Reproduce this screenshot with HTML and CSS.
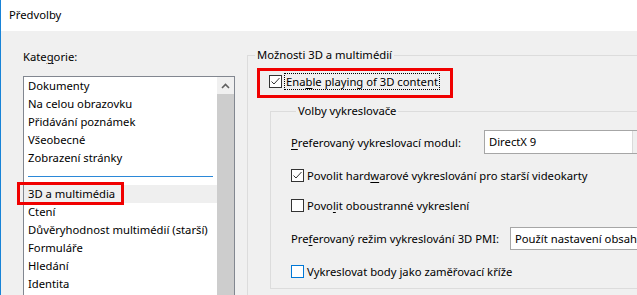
FILE: index.html
```html
<!DOCTYPE html>
<html lang="cs">
<head>
  <meta charset="UTF-8" />
  <title>Předvolby</title>
  <link rel="stylesheet" href="styles.css">
</head>
<body>

  <div class="window">
    <div class="titlebar">Předvolby</div>

    <div class="content">
      <!-- left: category list -->
      <div class="categories">
        <div class="cat-label">Kate<u>g</u>orie:</div>
        <div class="listbox">
          <ul class="cat-list">
            <li>Dokumenty</li>
            <li>Na celou obrazovku</li>
            <li>Přidávání poznámek</li>
            <li>Všeobecné</li>
            <li>Zobrazení stránky</li>
            <li class="sep"><span></span></li>
            <li class="selected">3D a multimédia<span class="callout"></span></li>
            <li>Ctení</li>
            <li>Důvěryhodnost multimédií (starší)</li>
            <li>Formuláře</li>
            <li>Hledání</li>
            <li>Identita</li>
          </ul>
          <div class="scrollbar">
            <div class="scroll-btn">
              <svg width="9" height="6" viewBox="0 0 9 6"><polyline points="1,5 4.5,1.5 8,5" fill="none" stroke="#606060" stroke-width="1.6"/></svg>
            </div>
            <div class="scroll-thumb"></div>
          </div>
        </div>
      </div>

      <!-- right: settings -->
      <div class="settings">
        <fieldset class="group outer">
          <legend>Možnosti 3D a multimédií</legend>

          <div class="enable-row">
            <span class="checkbox checked">
              <svg width="11" height="11" viewBox="0 0 11 11"><polyline points="1.5,5.5 4,8 9.5,2" fill="none" stroke="#333" stroke-width="1"/></svg>
            </span>
            <span class="focus-text">Ena<u>b</u>le playing of 3D content</span>
            <span class="callout"></span>
          </div>

          <fieldset class="group inner">
            <legend>Volby vykreslovače</legend>

            <div class="row">
              <span class="label module-label"><u>P</u>referovaný vykreslovací modul:</span>
              <div class="combo module-combo"><span class="combo-text">DirectX 9</span><span class="combo-btn"></span></div>
            </div>

            <div class="row">
              <span class="checkbox checked">
                <svg width="11" height="11" viewBox="0 0 11 11"><polyline points="1.5,5.5 4,8 9.5,2" fill="none" stroke="#333" stroke-width="1"/></svg>
              </span>
              <span class="check-text">Povolit hard<u>w</u>arové vykreslování pro starší videokarty</span>
            </div>

            <div class="row">
              <span class="checkbox"></span>
              <span class="check-text">Povo<u>l</u>it oboustranné vykreslení</span>
            </div>

            <div class="row">
              <span class="label pmi-label">Pre<u>f</u>erovaný režim vykreslování 3D PMI:</span>
              <div class="combo pmi-combo"><span class="combo-text">Použít nastavení obsahu</span></div>
            </div>

            <div class="row">
              <span class="checkbox hover"></span>
              <span class="check-text">Vykreslovat body jako zaměřovací kříže</span>
            </div>
          </fieldset>
        </fieldset>
      </div>
    </div>
  </div>

</body>
</html>
```

FILE: styles.css
```css
html, body {
  margin: 0;
  padding: 0;
  overflow: hidden;
  background: #f0f0f0;
}
body {
  font-family: "Noto Sans", "Open Sans", sans-serif;
  font-size: 11.25px;
  color: #000;
}
u {
  text-decoration-thickness: 1px;
  text-underline-offset: 2px;
}
.window {
  width: 760px;
  height: 295px;
  border-left: 1px solid #1883d7;
  box-sizing: border-box;
}
.titlebar {
  height: 31px;
  line-height: 30px;
  padding-left: 8px;
  background: #fff;
}
.content {
  display: flex;
  align-items: flex-start;
}

/* Category list */
.categories {
  padding: 18px 0 0 22px;
}
.cat-label {
  line-height: 16px;
  height: 16px;
  margin-bottom: 11px;
}
.listbox {
  display: flex;
  width: 212px;
  height: 240px;
  border: 1px solid #828790;
  background: #fff;
  box-sizing: border-box;
}
.cat-list {
  flex: 1;
  margin: 0;
  padding: 0;
  list-style: none;
}
.cat-list li {
  position: relative;
  height: 18px;
  line-height: 18px;
  padding-left: 4px;
  white-space: nowrap;
}
.cat-list li.sep {
  display: flex;
  align-items: center;
  padding-right: 4px;
}
.cat-list li.sep span {
  flex: 1;
  height: 1px;
  background: #2b88d8;
}
.cat-list li.selected {
  background: #efefef;
}
.callout {
  position: absolute;
  border: 3px solid #f00000;
  box-sizing: border-box;
  pointer-events: none;
}
.cat-list li.selected .callout {
  left: -7px;
  top: -3px;
  width: 107px;
  height: 23px;
}
.scrollbar {
  width: 17px;
  display: flex;
  flex-direction: column;
  background: #f0f0f0;
}
.scroll-btn {
  height: 17px;
  display: flex;
  align-items: center;
  justify-content: center;
}
.scroll-thumb {
  flex: 1;
  background: #cdcdcd;
}

/* Settings */
.settings {
  padding-top: 16px;
  margin-left: 12px;
}
.group {
  margin: 0;
  padding: 0;
  border: 1px solid #dcdcdc;
  min-width: 0;
}
.group legend {
  padding: 0 2px;
  line-height: 16px;
}
.outer {
  width: 420px;
  height: 300px;
}
.outer > legend {
  margin-left: 7px;
}
.enable-row {
  position: relative;
  display: inline-flex;
  align-items: center;
  margin: 10px 0 0 21px;
}
.enable-row .callout {
  left: -12px;
  right: -13px;
  top: -5px;
  bottom: -8px;
}
.focus-text {
  margin-left: 2px;
  padding: 0 1px;
  line-height: 15px;
  border: 1px dotted #000;
}
.inner {
  margin: 13px 0 0 22px;
  padding: 0 0 8px 20px;
  display: flex;
  flex-direction: column;
  gap: 13px;
}
.inner > legend {
  margin-left: 5px;
}
.inner > legend + .row {
  margin-top: 11px;
}
.row {
  display: flex;
  align-items: center;
  line-height: 17px;
  white-space: nowrap;
}
.row > * {
  flex-shrink: 0;
}
.checkbox {
  width: 13px;
  height: 13px;
  box-sizing: border-box;
  border: 1px solid #333;
  background: #fff;
  display: inline-flex;
  align-items: center;
  justify-content: center;
}
.checkbox.hover {
  border-color: #0078d7;
}
.check-text {
  margin-left: 3px;
}
.module-label {
  width: 193px;
}
.pmi-label {
  width: 219px;
}
.combo {
  display: flex;
  border: 1px solid #a6a6a6;
  background: #fff;
  box-sizing: border-box;
}
.combo-text {
  flex: 1;
  padding-left: 4px;
}
.module-combo {
  width: 156px;
  height: 24px;
  line-height: 22px;
}
.combo-btn {
  width: 6px;
  background: #f0f0f0;
  border-left: 1px solid #dadada;
}
.pmi-combo {
  width: 200px;
  height: 23px;
  line-height: 21px;
}
```
